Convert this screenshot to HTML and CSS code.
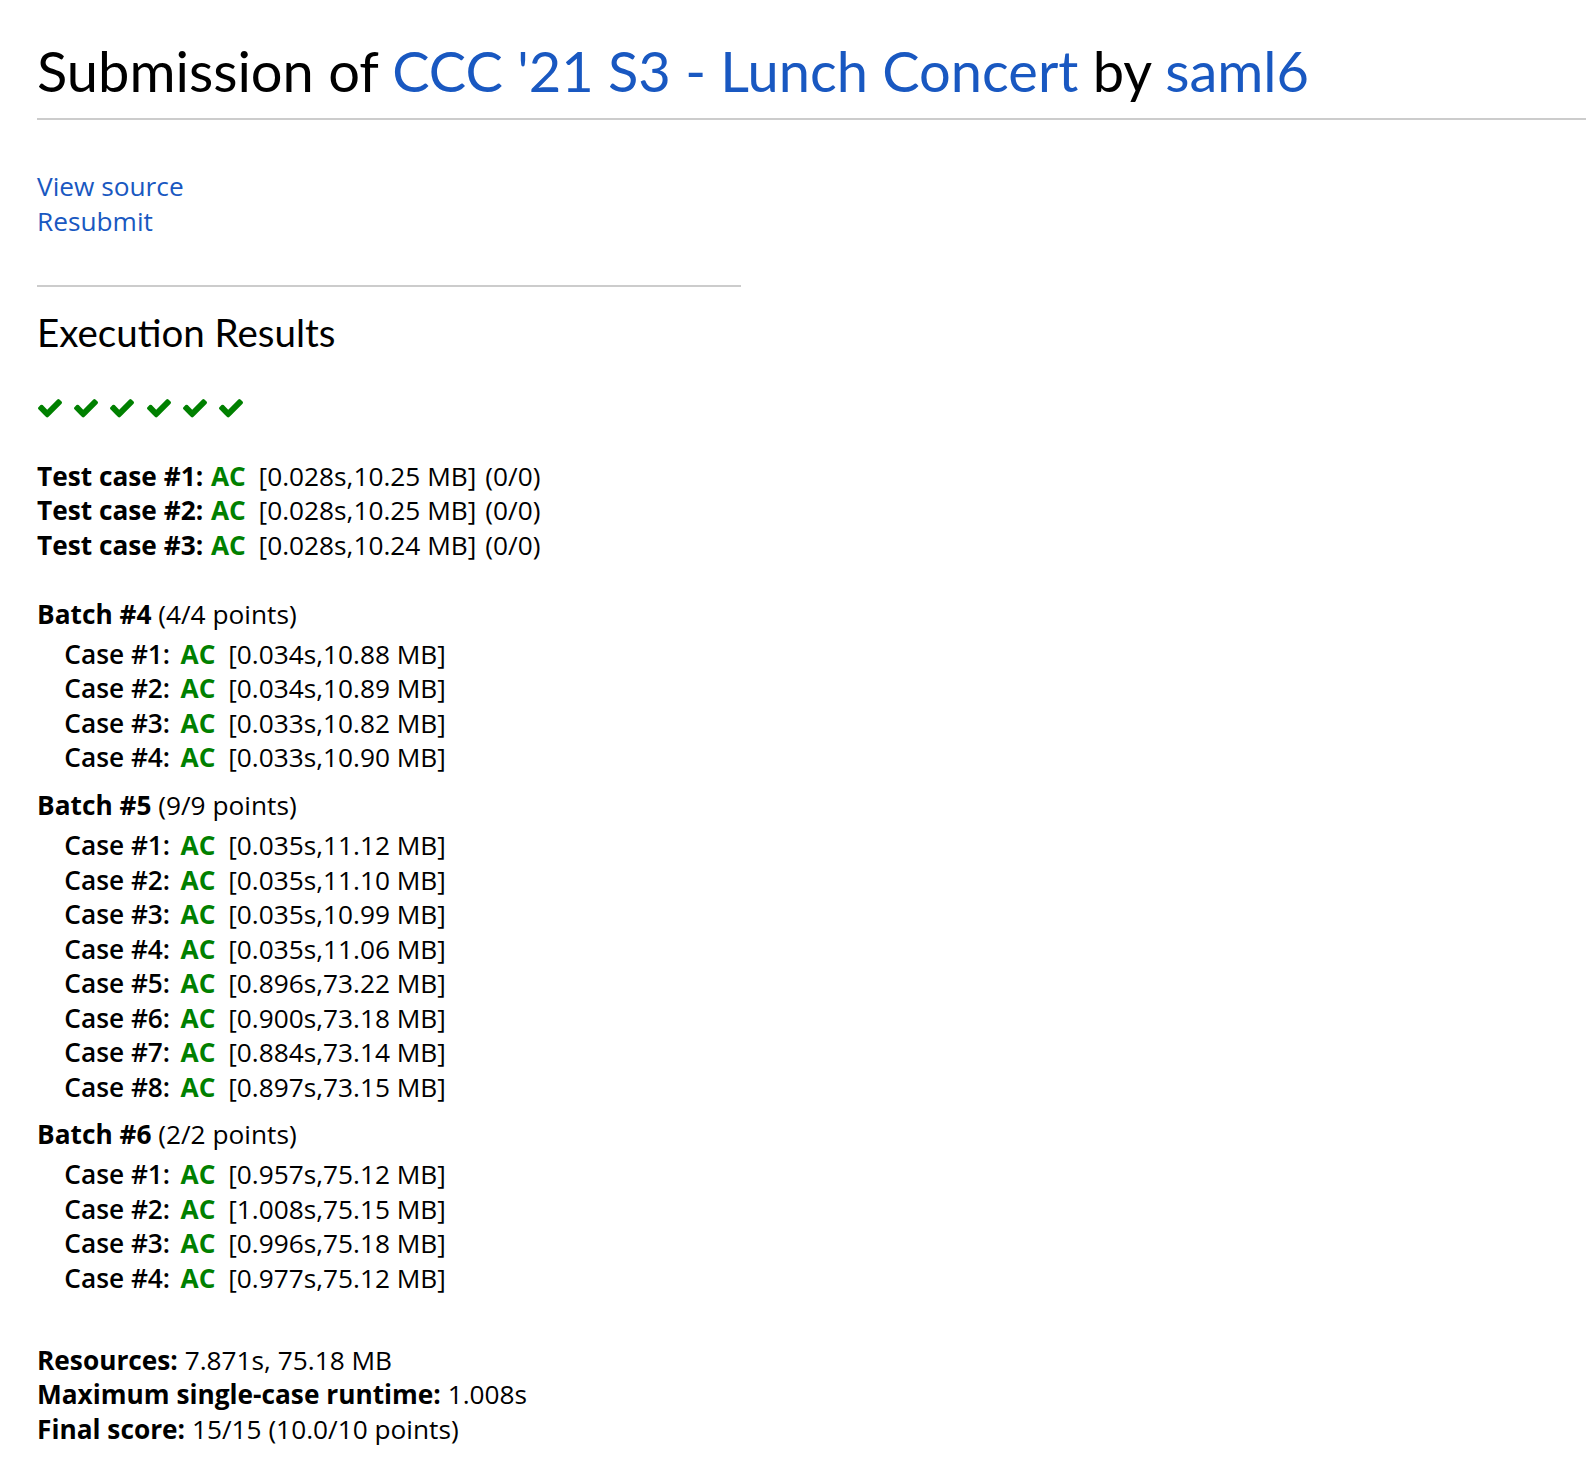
FILE: index.html
```html
<!DOCTYPE html>
<html>
<head>
<meta charset="utf-8">
<title>Submission of CCC '21 S3 - Lunch Concert by saml6</title>
<link rel="stylesheet" href="styles.css">
</head>
<body>
<div class="page">
  <h2 class="title">Submission of <a href="#">CCC '21 S3 - Lunch Concert</a> by <a href="#">saml6</a></h2>

  <div class="actions">
    <a href="#">View source</a>
    <a href="#">Resubmit</a>
  </div>

  <hr class="sep">

  <h3 class="section">Execution Results</h3>

  <div class="checks">
    <svg class="check" viewBox="121 334 1550 1188" preserveAspectRatio="none"><path d="M1671 566q0 40-28 68l-724 724-136 136q-28 28-68 28t-68-28l-136-136-362-362q-28-28-28-68t28-68l136-136q28-28 68-28t68 28l294 295 656-657q28-28 68-28t68 28l136 136q28 28 28 68z"/></svg>
    <svg class="check" viewBox="121 334 1550 1188" preserveAspectRatio="none"><path d="M1671 566q0 40-28 68l-724 724-136 136q-28 28-68 28t-68-28l-136-136-362-362q-28-28-28-68t28-68l136-136q28-28 68-28t68 28l294 295 656-657q28-28 68-28t68 28l136 136q28 28 28 68z"/></svg>
    <svg class="check" viewBox="121 334 1550 1188" preserveAspectRatio="none"><path d="M1671 566q0 40-28 68l-724 724-136 136q-28 28-68 28t-68-28l-136-136-362-362q-28-28-28-68t28-68l136-136q28-28 68-28t68 28l294 295 656-657q28-28 68-28t68 28l136 136q28 28 28 68z"/></svg>
    <svg class="check" viewBox="121 334 1550 1188" preserveAspectRatio="none"><path d="M1671 566q0 40-28 68l-724 724-136 136q-28 28-68 28t-68-28l-136-136-362-362q-28-28-28-68t28-68l136-136q28-28 68-28t68 28l294 295 656-657q28-28 68-28t68 28l136 136q28 28 28 68z"/></svg>
    <svg class="check" viewBox="121 334 1550 1188" preserveAspectRatio="none"><path d="M1671 566q0 40-28 68l-724 724-136 136q-28 28-68 28t-68-28l-136-136-362-362q-28-28-28-68t28-68l136-136q28-28 68-28t68 28l294 295 656-657q28-28 68-28t68 28l136 136q28 28 28 68z"/></svg>
    <svg class="check" viewBox="121 334 1550 1188" preserveAspectRatio="none"><path d="M1671 566q0 40-28 68l-724 724-136 136q-28 28-68 28t-68-28l-136-136-362-362q-28-28-28-68t28-68l136-136q28-28 68-28t68 28l294 295 656-657q28-28 68-28t68 28l136 136q28 28 28 68z"/></svg>
  </div>

  <div class="tests">
    <div class="test-row"><b>Test case #1:</b><span class="ac">AC</span><span>[0.028s,10.25 MB]</span><span class="pts">(0/0)</span></div>
    <div class="test-row"><b>Test case #2:</b><span class="ac">AC</span><span>[0.028s,10.25 MB]</span><span class="pts">(0/0)</span></div>
    <div class="test-row"><b>Test case #3:</b><span class="ac">AC</span><span>[0.028s,10.24 MB]</span><span class="pts">(0/0)</span></div>
  </div>

  <div class="batch">
    <div class="batch-head"><b>Batch #4</b> (4/4 points)</div>
    <div class="cases">
      <span class="case-label">Case #1:</span><span class="ac">AC</span><span>[0.034s,10.88 MB]</span>
      <span class="case-label">Case #2:</span><span class="ac">AC</span><span>[0.034s,10.89 MB]</span>
      <span class="case-label">Case #3:</span><span class="ac">AC</span><span>[0.033s,10.82 MB]</span>
      <span class="case-label">Case #4:</span><span class="ac">AC</span><span>[0.033s,10.90 MB]</span>
    </div>
  </div>

  <div class="batch">
    <div class="batch-head"><b>Batch #5</b> (9/9 points)</div>
    <div class="cases">
      <span class="case-label">Case #1:</span><span class="ac">AC</span><span>[0.035s,11.12 MB]</span>
      <span class="case-label">Case #2:</span><span class="ac">AC</span><span>[0.035s,11.10 MB]</span>
      <span class="case-label">Case #3:</span><span class="ac">AC</span><span>[0.035s,10.99 MB]</span>
      <span class="case-label">Case #4:</span><span class="ac">AC</span><span>[0.035s,11.06 MB]</span>
      <span class="case-label">Case #5:</span><span class="ac">AC</span><span>[0.896s,73.22 MB]</span>
      <span class="case-label">Case #6:</span><span class="ac">AC</span><span>[0.900s,73.18 MB]</span>
      <span class="case-label">Case #7:</span><span class="ac">AC</span><span>[0.884s,73.14 MB]</span>
      <span class="case-label">Case #8:</span><span class="ac">AC</span><span>[0.897s,73.15 MB]</span>
    </div>
  </div>

  <div class="batch">
    <div class="batch-head"><b>Batch #6</b> (2/2 points)</div>
    <div class="cases">
      <span class="case-label">Case #1:</span><span class="ac">AC</span><span>[0.957s,75.12 MB]</span>
      <span class="case-label">Case #2:</span><span class="ac">AC</span><span>[1.008s,75.15 MB]</span>
      <span class="case-label">Case #3:</span><span class="ac">AC</span><span>[0.996s,75.18 MB]</span>
      <span class="case-label">Case #4:</span><span class="ac">AC</span><span>[0.977s,75.12 MB]</span>
    </div>
  </div>

  <div class="summary">
    <div><b>Resources:</b> 7.871s, 75.18 MB</div>
    <div><b>Maximum single-case runtime:</b> 1.008s</div>
    <div><b>Final score:</b> 15/15 (10.0/10 points)</div>
  </div>
</div>
</body>
</html>
```

FILE: styles.css
```css
html, body {
  margin: 0;
  padding: 0;
  background: #fff;
}

body {
  font-family: "Open Sans", Lato, "Noto Sans", sans-serif;
  font-size: 26.25px;
  line-height: 34.5px;
  color: #000;
}

a {
  color: #1958c1;
  text-decoration: none;
}

b {
  font-weight: 700;
}

.page {
  padding-left: 37px;
  padding-bottom: 20px;
}

.title {
  margin: 37px 0 0;
  padding-bottom: 13px;
  border-bottom: 2px solid #ccc;
  font-family: Lato, "Open Sans", sans-serif;
  font-size: 56px;
  line-height: 68px;
  font-weight: 400;
  white-space: nowrap;
}

.actions {
  margin-top: 49px;
  display: flex;
  flex-direction: column;
  align-items: flex-start;
}

.sep {
  width: 704px;
  margin: 47px 0 0;
  border: 0;
  border-top: 2px solid #ccc;
  height: 0;
}

.section {
  margin: 19px 0 0;
  font-family: Lato, "Open Sans", sans-serif;
  font-size: 38.5px;
  line-height: 52px;
  font-weight: 400;
}

.checks {
  margin-top: 41px;
  padding-left: 1px;
  display: flex;
  gap: 12.2px;
  height: 19px;
}

.check {
  width: 24px;
  height: 18.5px;
  fill: #008000;
}

.tests {
  margin-top: 40.5px;
}

.test-row {
  display: grid;
  grid-template-columns: 174px 47.6px max-content auto;
  white-space: nowrap;
}

.pts {
  padding-left: 9px;
}

.ac {
  color: #008000;
  font-weight: 700;
}

.batch {
  margin-top: 34.5px;
}

.batch + .batch {
  margin-top: 13px;
}

.cases {
  margin-top: 5.8px;
  padding-left: 27.3px;
  display: grid;
  grid-template-columns: 116.3px 47.6px auto;
  white-space: nowrap;
}

.case-label {
  font-weight: 600;
}

.summary {
  margin-top: 47.5px;
}
```
